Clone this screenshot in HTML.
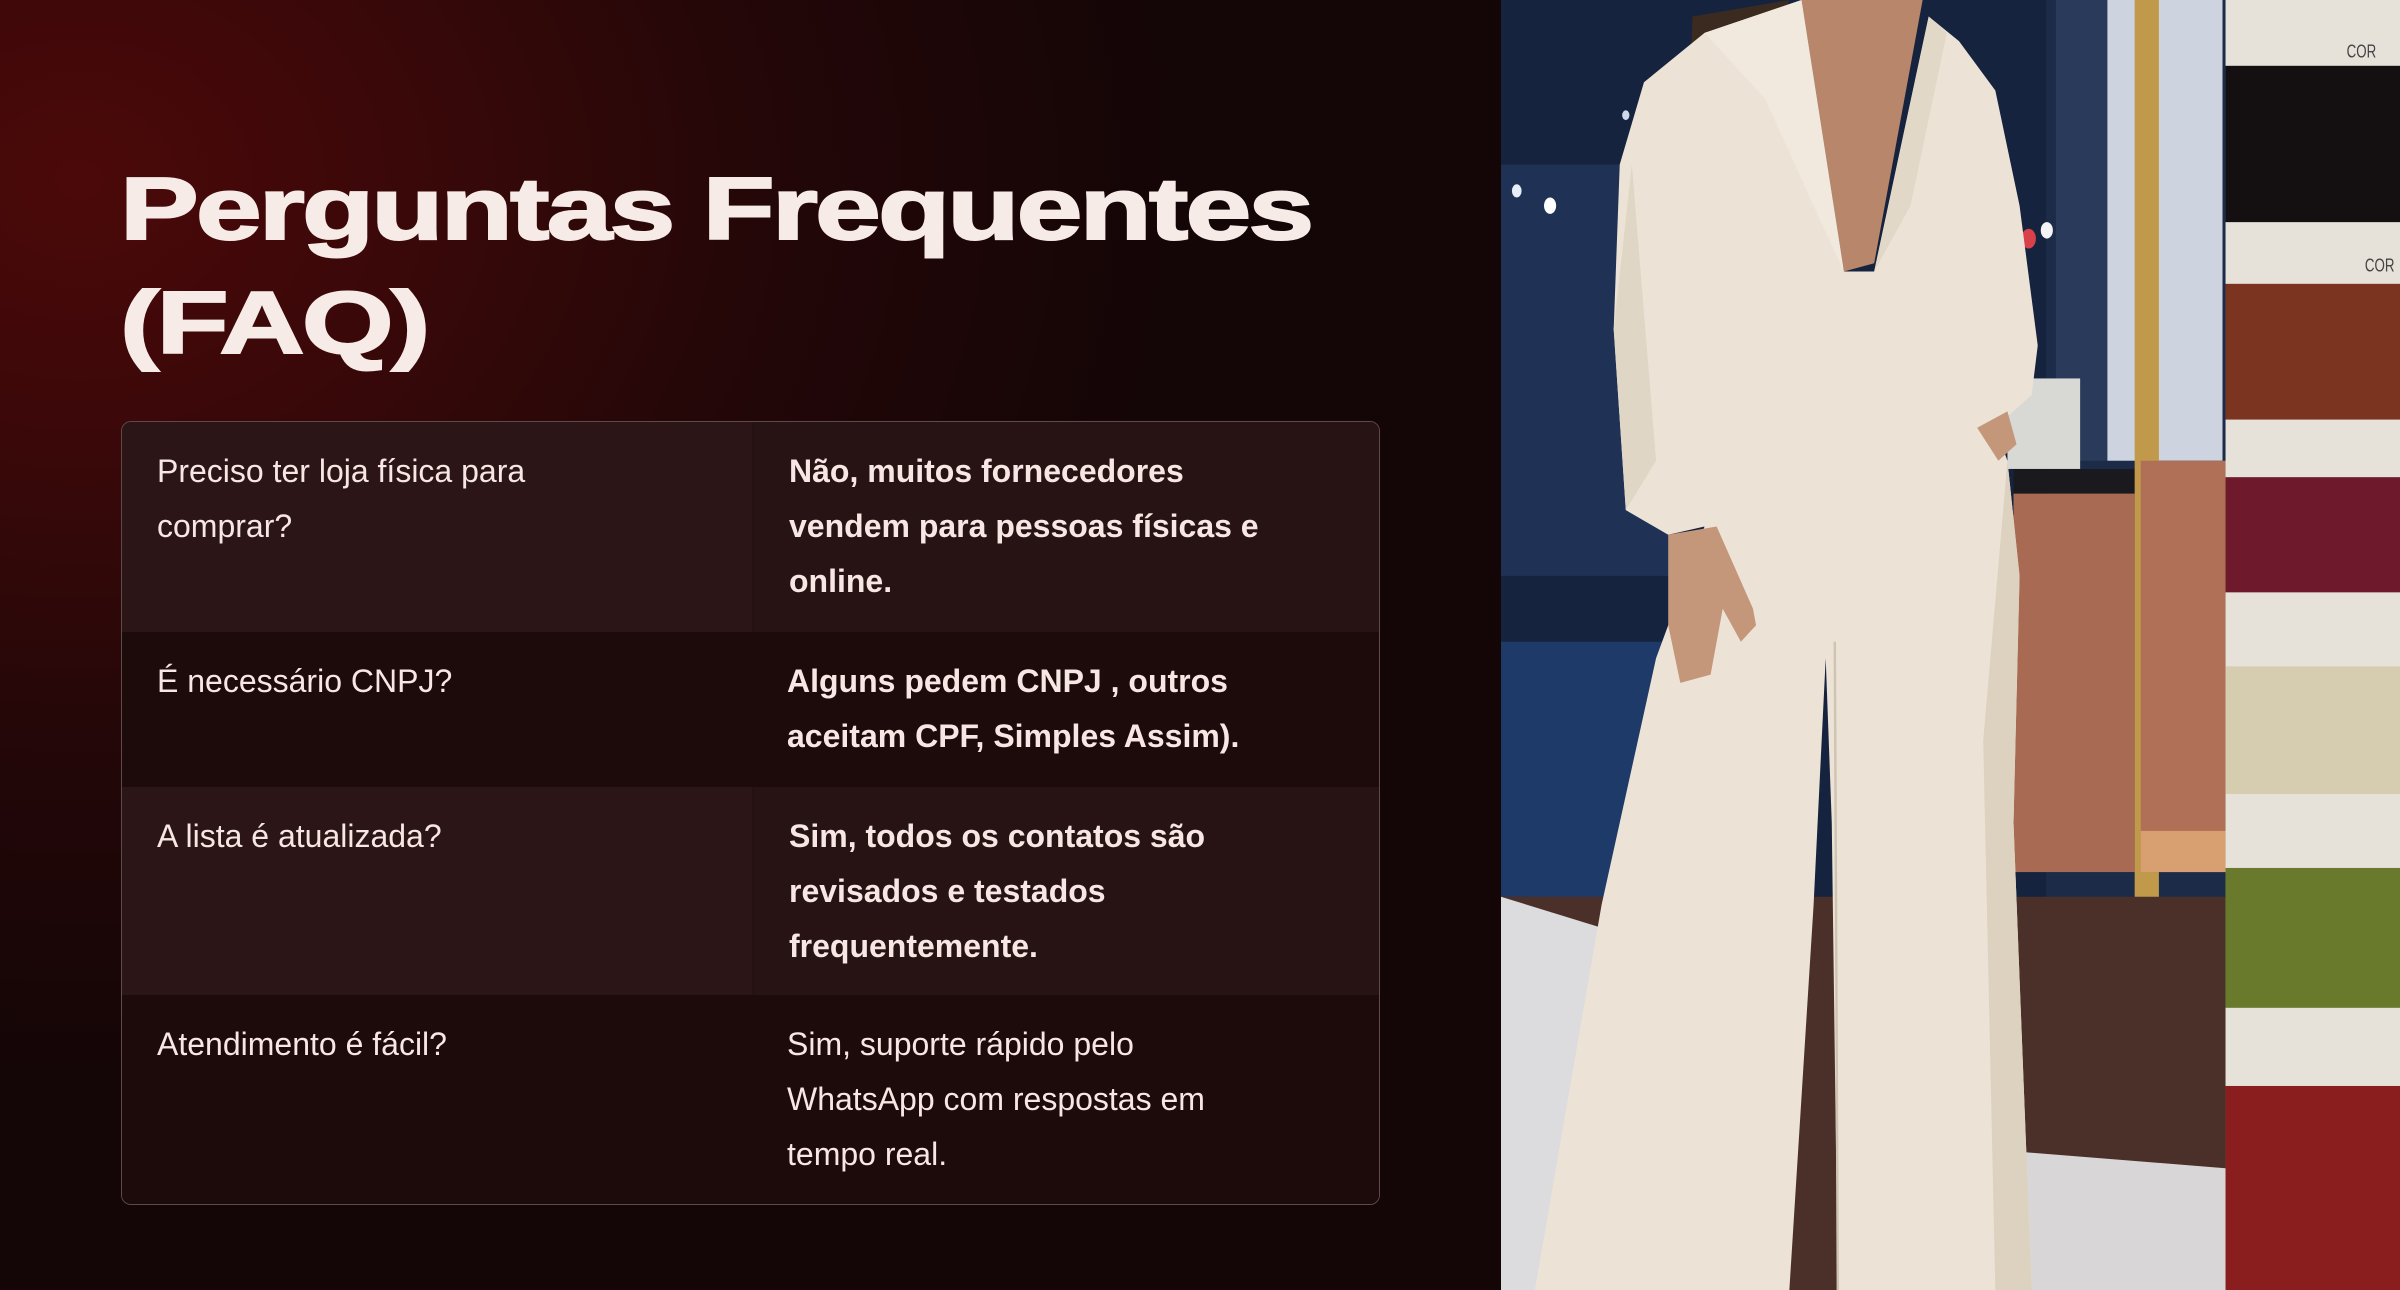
<!DOCTYPE html>
<html><head><meta charset="utf-8"><style>
html,body{margin:0;padding:0;}
body{width:2400px;height:1290px;position:relative;overflow:hidden;background:#120506;font-family:"Liberation Sans",sans-serif;}
#left{position:absolute;left:0;top:0;width:1501px;height:1290px;
background:radial-gradient(ellipse 1100px 900px at 80px 180px,#4c0909 0%,#3a0809 30%,#240708 62%,#140506 100%);}
h1{position:absolute;left:120px;top:152px;margin:0;color:#f7ebe8;font-weight:bold;font-size:88px;line-height:114px;transform:scaleX(1.34);transform-origin:left top;letter-spacing:-2px;white-space:nowrap;-webkit-text-stroke:2px #f7ebe8;}
#tbl{position:absolute;left:121px;top:421px;width:1257px;height:782px;border:1.5px solid #5e4a4a;border-radius:10px;overflow:hidden;}
.row{display:flex;}
.c{box-sizing:border-box;padding:22px 0 0 35px;color:#f6e7e4;font-size:32px;line-height:55px;}
.q{width:630px;padding-right:165px;}
.a{width:627px;padding-right:102px;}
.b{font-weight:bold;}
.r1{background:#2c1516;}
.r1 .a{background:#281314;border-left:2px solid #241112;}
.r2{background:#1d0a0b;}
</style></head><body>
<div id="left">
<h1>Perguntas Frequentes<br>(FAQ)</h1>
<div id="tbl">
<div class="row r1" style="height:210px"><div class="c q">Preciso ter loja física para comprar?</div><div class="c a b">Não, muitos fornecedores vendem para pessoas físicas e online.</div></div>
<div class="row r2" style="height:155px"><div class="c q">É necessário CNPJ?</div><div class="c a b">Alguns pedem CNPJ , outros aceitam CPF, Simples Assim).</div></div>
<div class="row r1" style="height:208px"><div class="c q">A lista é atualizada?</div><div class="c a b">Sim, todos os contatos são revisados e testados frequentemente.</div></div>
<div class="row r2" style="height:212px"><div class="c q">Atendimento é fácil?</div><div class="c a">Sim, suporte rápido pelo WhatsApp com respostas em tempo real.</div></div>
</div>
</div>
<svg style="position:absolute;left:1501px;top:0" width="899" height="1290" viewBox="84 0 1484 1568" preserveAspectRatio="none">
<rect x="84" y="0" width="1200" height="1568" fill="#1c2b48"/>
<rect x="84" y="0" width="900" height="1100" fill="#16233e"/>
<rect x="84" y="200" width="300" height="500" fill="#27406a" opacity="0.5"/>
<rect x="84" y="780" width="300" height="320" fill="#1e3a68"/>
<circle cx="110" cy="232" r="8" fill="#e8eef8"/><circle cx="165" cy="250" r="10" fill="#fff"/><circle cx="290" cy="140" r="6" fill="#cfd8e8"/>
<circle cx="985" cy="280" r="10" fill="#f4f4f4"/><circle cx="955" cy="290" r="12" fill="#d8404a"/>
<rect x="1000" y="0" width="140" height="560" fill="#2a3a5a"/>
<rect x="1085" y="0" width="190" height="560" fill="#cdd3df"/>
<rect x="930" y="570" width="210" height="30" fill="#1a1a1e"/>
<rect x="930" y="600" width="200" height="460" fill="#a86a52"/>
<rect x="1130" y="0" width="40" height="1110" fill="#c09a4a"/>
<rect x="1140" y="560" width="140" height="500" fill="#b07058"/>
<rect x="1140" y="1010" width="140" height="50" fill="#d8a070"/>
<rect x="84" y="1090" width="1200" height="478" fill="#4a3028"/>
<polygon points="84,1090 260,1130 420,1300 300,1568 84,1568" fill="#dcdcde"/>
<polygon points="940,1400 1280,1420 1280,1568 960,1568" fill="#d8d6d6"/>
<rect x="920" y="460" width="120" height="110" fill="#d8d8d4"/>
<path d="M400 20 L560 0 L520 100 L470 180 L420 270 L390 260 Z" fill="#3a2a20"/>
<path d="M580 0 L780 0 L700 320 L650 330 Z" fill="#b8866a"/>
<path d="M420 40 L580 0 L650 330 L700 330 L790 20 L840 50 L900 110 L940 250 L970 420 L960 480 L930 500 L900 520 L920 560 L940 700 L930 1000 L960 1568 L640 1568 L630 1000 L620 800 L600 1100 L560 1568 L140 1568 L250 1100 L340 800 L420 640 L360 650 L290 620 L270 400 L280 200 L320 100 Z" fill="#ece3d6"/>
<path d="M420 40 L580 0 L650 330 L600 250 L520 120 Z" fill="#f1e9de"/>
<path d="M700 330 L790 20 L820 40 L760 250 Z" fill="#e2d8c8"/>
<path d="M300 200 L340 560 L290 620 L270 400 Z" fill="#e0d6c6"/>
<path d="M920 560 L940 700 L930 1000 L960 1568 L900 1568 L880 900 Z" fill="#ddd2c0"/>
<line x1="635" y1="780" x2="640" y2="1568" stroke="#cfc4b2" stroke-width="4"/>
<path d="M360 650 L440 640 L500 740 L505 760 L480 780 L450 740 L430 820 L380 830 L360 760 Z" fill="#c4977a"/>
<path d="M870 520 L920 500 L935 540 L905 560 Z" fill="#c4977a"/>
<rect x="1280" y="0" width="288" height="1568" fill="#e6e2da"/>
<rect x="1280" y="80" width="288" height="190" fill="#141012"/>
<rect x="1280" y="345" width="288" height="165" fill="#7a3420"/>
<rect x="1280" y="580" width="288" height="140" fill="#6e1a2c"/>
<rect x="1280" y="810" width="288" height="155" fill="#d6ccb0"/>
<rect x="1280" y="1055" width="288" height="170" fill="#6a7a2c"/>
<rect x="1280" y="1320" width="288" height="248" fill="#8a1e1e"/>
<text x="1480" y="70" font-family="Liberation Sans" font-size="22" fill="#444">COR</text>
<text x="1510" y="330" font-family="Liberation Sans" font-size="22" fill="#444">COR</text>
</svg>
</body></html>
